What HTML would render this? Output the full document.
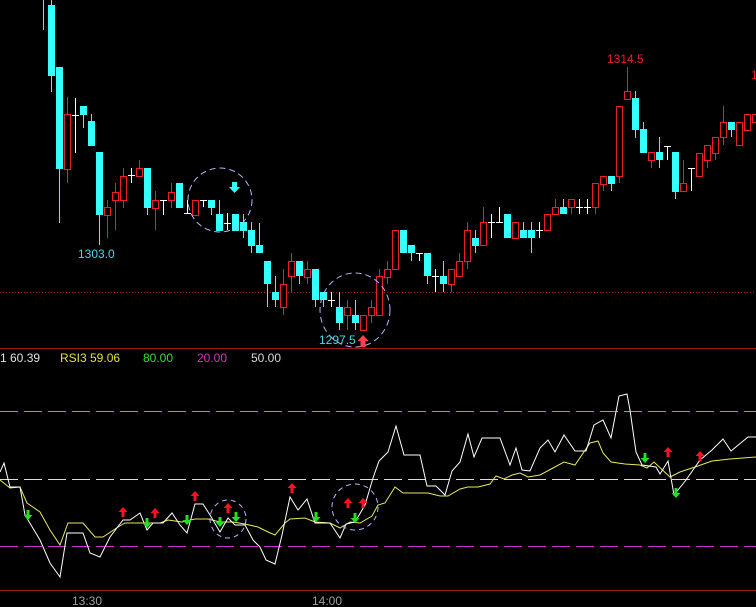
<!DOCTYPE html>
<html><head><meta charset="utf-8"><style>
html,body{margin:0;padding:0;background:#000;width:756px;height:607px;overflow:hidden}
svg{display:block}
text{font-family:"Liberation Sans",sans-serif;font-size:12px}
.c{fill:#33ffff}.cw{stroke:#33ffff;stroke-width:1}
.r{fill:none;stroke:#e8202a;stroke-width:1}.rw{stroke:#e8202a;stroke-width:1}
.w{stroke:#fff;stroke-width:1}
</style></head><body>
<svg width="756" height="607" viewBox="0 0 756 607" xmlns="http://www.w3.org/2000/svg" shape-rendering="crispEdges">
<rect width="756" height="607" fill="#000"/>
<line x1="0" y1="292.5" x2="756" y2="292.5" stroke="#a02020" stroke-dasharray="1,2"/>
<line x1="0" y1="348.5" x2="756" y2="348.5" stroke="#a01818"/>
<line x1="0" y1="590.5" x2="756" y2="590.5" stroke="#a01818"/>
<line x1="0" y1="411.5" x2="756" y2="411.5" stroke="#30e030" stroke-dasharray="18,6"/>
<line x1="0" y1="479.5" x2="756" y2="479.5" stroke="#f0d8c8" stroke-dasharray="18,6"/>
<line x1="0" y1="546.5" x2="756" y2="546.5" stroke="#d030d0" stroke-dasharray="18,6"/>

<g>
<line x1="43.5" y1="0" x2="43.5" y2="30" class="cw"/>
<line x1="51.5" y1="0" x2="51.5" y2="92" class="cw"/><rect x="48" y="5" width="7" height="71" class="c"/>
<line x1="59.5" y1="67" x2="59.5" y2="223" class="cw"/><rect x="56" y="67" width="7" height="102" class="c"/>
<line x1="67.5" y1="97" x2="67.5" y2="183" class="rw"/><rect x="64.5" y="114.5" width="6" height="55" class="r" style="fill:#000"/>
<line x1="75.5" y1="98" x2="75.5" y2="153" class="w"/><line x1="72" y1="115.5" x2="79" y2="115.5" class="w"/>
<line x1="83.5" y1="106" x2="83.5" y2="128" class="cw"/><rect x="80" y="106" width="7" height="9" class="c"/>
<line x1="91.5" y1="114" x2="91.5" y2="146" class="cw"/><rect x="88" y="121" width="7" height="25" class="c"/>
<line x1="99.5" y1="152" x2="99.5" y2="245" class="cw"/><rect x="96" y="152" width="7" height="63" class="c"/>
<line x1="107.5" y1="200" x2="107.5" y2="238" class="rw"/><rect x="104.5" y="207.5" width="6" height="8" class="r" style="fill:#000"/>
<line x1="115.5" y1="183" x2="115.5" y2="230" class="rw"/><rect x="112.5" y="192.5" width="6" height="8" class="r" style="fill:#000"/>
<line x1="123.5" y1="168" x2="123.5" y2="208" class="rw"/><rect x="120.5" y="176.5" width="6" height="24" class="r" style="fill:#000"/>
<line x1="131.5" y1="168" x2="131.5" y2="183" class="w"/><line x1="128" y1="175.5" x2="135" y2="175.5" class="w"/>
<line x1="139.5" y1="160" x2="139.5" y2="176" class="rw"/><rect x="136.5" y="168.5" width="6" height="8" class="r" style="fill:#000"/>
<line x1="147.5" y1="168" x2="147.5" y2="215" class="cw"/><rect x="144" y="168" width="7" height="40" class="c"/>
<line x1="155.5" y1="191" x2="155.5" y2="230" class="rw"/><rect x="152.5" y="200.5" width="6" height="8" class="r" style="fill:#000"/>
<line x1="163.5" y1="200" x2="163.5" y2="215" class="w"/><line x1="160" y1="200.5" x2="167" y2="200.5" class="w"/>
<line x1="171.5" y1="183" x2="171.5" y2="208" class="rw"/><rect x="168.5" y="192.5" width="6" height="8" class="r" style="fill:#000"/>
<rect x="176" y="183" width="7" height="25" class="c"/>
<line x1="187.5" y1="200" x2="187.5" y2="213" class="w"/><line x1="184" y1="213.5" x2="191" y2="213.5" class="w"/>
<rect x="192.5" y="200.5" width="6" height="15" class="r" style="fill:#000"/>
<line x1="203.5" y1="200" x2="203.5" y2="207" class="w"/><line x1="200" y1="200.5" x2="207" y2="200.5" class="w"/>
<line x1="211.5" y1="200" x2="211.5" y2="215" class="cw"/><rect x="208" y="200" width="7" height="8" class="c"/>
<line x1="219.5" y1="200" x2="219.5" y2="231" class="cw"/><rect x="216" y="214" width="7" height="17" class="c"/>
<line x1="227.5" y1="213" x2="227.5" y2="230" class="w"/><line x1="224" y1="223.5" x2="231" y2="223.5" class="w"/>
<rect x="232" y="214" width="7" height="17" class="c"/>
<line x1="243.5" y1="214" x2="243.5" y2="238" class="cw"/><rect x="240" y="222" width="7" height="9" class="c"/>
<line x1="251.5" y1="222" x2="251.5" y2="253" class="cw"/><rect x="248" y="230" width="7" height="16" class="c"/>
<line x1="259.5" y1="223" x2="259.5" y2="253" class="cw"/><rect x="256" y="245" width="7" height="8" class="c"/>
<line x1="267.5" y1="261" x2="267.5" y2="307" class="cw"/><rect x="264" y="261" width="7" height="23" class="c"/>
<line x1="275.5" y1="276" x2="275.5" y2="307" class="cw"/><rect x="272" y="292" width="7" height="8" class="c"/>
<line x1="283.5" y1="269" x2="283.5" y2="315" class="rw"/><rect x="280.5" y="284.5" width="6" height="23" class="r" style="fill:#000"/>
<line x1="291.5" y1="253" x2="291.5" y2="292" class="rw"/><rect x="288.5" y="261.5" width="6" height="15" class="r" style="fill:#000"/>
<line x1="299.5" y1="261" x2="299.5" y2="284" class="cw"/><rect x="296" y="261" width="7" height="15" class="c"/>
<line x1="307.5" y1="261" x2="307.5" y2="284" class="rw"/><rect x="304.5" y="269.5" width="6" height="8" class="r" style="fill:#000"/>
<line x1="315.5" y1="269" x2="315.5" y2="307" class="cw"/><rect x="312" y="269" width="7" height="31" class="c"/>
<line x1="323.5" y1="292" x2="323.5" y2="307" class="cw"/><rect x="320" y="292" width="7" height="8" class="c"/>
<line x1="331.5" y1="292" x2="331.5" y2="307" class="w"/><line x1="328" y1="300.5" x2="335" y2="300.5" class="w"/>
<line x1="339.5" y1="292" x2="339.5" y2="330" class="cw"/><rect x="336" y="307" width="7" height="16" class="c"/>
<line x1="347.5" y1="300" x2="347.5" y2="330" class="rw"/><rect x="344.5" y="307.5" width="6" height="8" class="r" style="fill:#000"/>
<line x1="355.5" y1="300" x2="355.5" y2="330" class="cw"/><rect x="352" y="315" width="7" height="8" class="c"/>
<rect x="360.5" y="315.5" width="6" height="15" class="r" style="fill:#000"/>
<line x1="371.5" y1="300" x2="371.5" y2="323" class="rw"/><rect x="368.5" y="307.5" width="6" height="8" class="r" style="fill:#000"/>
<line x1="379.5" y1="269" x2="379.5" y2="315" class="rw"/><rect x="376.5" y="276.5" width="6" height="39" class="r" style="fill:#000"/>
<line x1="387.5" y1="261" x2="387.5" y2="284" class="rw"/><rect x="384.5" y="269.5" width="6" height="8" class="r" style="fill:#000"/>
<rect x="392.5" y="230.5" width="6" height="39" class="r" style="fill:#000"/>
<rect x="400" y="230" width="7" height="23" class="c"/>
<line x1="411.5" y1="245" x2="411.5" y2="261" class="cw"/><rect x="408" y="245" width="7" height="8" class="c"/>
<line x1="419.5" y1="253" x2="419.5" y2="261" class="w"/><line x1="416" y1="253.5" x2="423" y2="253.5" class="w"/>
<line x1="427.5" y1="253" x2="427.5" y2="284" class="cw"/><rect x="424" y="253" width="7" height="23" class="c"/>
<line x1="435.5" y1="269" x2="435.5" y2="292" class="w"/><line x1="432" y1="276.5" x2="439" y2="276.5" class="w"/>
<line x1="443.5" y1="261" x2="443.5" y2="292" class="cw"/><rect x="440" y="276" width="7" height="8" class="c"/>
<line x1="451.5" y1="269" x2="451.5" y2="292" class="rw"/><rect x="448.5" y="269.5" width="6" height="15" class="r" style="fill:#000"/>
<line x1="459.5" y1="253" x2="459.5" y2="276" class="rw"/><rect x="456.5" y="261.5" width="6" height="15" class="r" style="fill:#000"/>
<line x1="467.5" y1="222" x2="467.5" y2="269" class="rw"/><rect x="464.5" y="230.5" width="6" height="31" class="r" style="fill:#000"/>
<line x1="475.5" y1="230" x2="475.5" y2="253" class="cw"/><rect x="472" y="238" width="7" height="8" class="c"/>
<line x1="483.5" y1="207" x2="483.5" y2="245" class="rw"/><rect x="480.5" y="222.5" width="6" height="23" class="r" style="fill:#000"/>
<line x1="491.5" y1="214" x2="491.5" y2="238" class="w"/><line x1="488" y1="222.5" x2="495" y2="222.5" class="w"/>
<line x1="499.5" y1="207" x2="499.5" y2="222" class="w"/><line x1="496" y1="222.5" x2="503" y2="222.5" class="w"/>
<rect x="504" y="214" width="7" height="24" class="c"/>
<rect x="512.5" y="222.5" width="6" height="16" class="r" style="fill:#000"/>
<line x1="523.5" y1="222" x2="523.5" y2="238" class="cw"/><rect x="520" y="230" width="7" height="8" class="c"/>
<line x1="531.5" y1="222" x2="531.5" y2="253" class="cw"/><rect x="528" y="230" width="7" height="8" class="c"/>
<line x1="539.5" y1="222" x2="539.5" y2="238" class="w"/><line x1="536" y1="230.5" x2="543" y2="230.5" class="w"/>
<rect x="544.5" y="214.5" width="6" height="16" class="r" style="fill:#000"/>
<line x1="555.5" y1="199" x2="555.5" y2="214" class="rw"/><rect x="552.5" y="207.5" width="6" height="7" class="r" style="fill:#000"/>
<line x1="563.5" y1="199" x2="563.5" y2="214" class="cw"/><rect x="560" y="207" width="7" height="7" class="c"/>
<line x1="571.5" y1="199" x2="571.5" y2="214" class="rw"/><rect x="568.5" y="199.5" width="6" height="8" class="r" style="fill:#000"/>
<line x1="579.5" y1="199" x2="579.5" y2="214" class="w"/><line x1="576" y1="207.5" x2="583" y2="207.5" class="w"/>
<line x1="587.5" y1="199" x2="587.5" y2="214" class="w"/><line x1="584" y1="207.5" x2="591" y2="207.5" class="w"/>
<line x1="595.5" y1="183" x2="595.5" y2="214" class="rw"/><rect x="592.5" y="183.5" width="6" height="24" class="r" style="fill:#000"/>
<line x1="603.5" y1="176" x2="603.5" y2="191" class="rw"/><rect x="600.5" y="176.5" width="6" height="8" class="r" style="fill:#000"/>
<line x1="611.5" y1="176" x2="611.5" y2="191" class="cw"/><rect x="608" y="176" width="7" height="8" class="c"/>
<line x1="619.5" y1="106" x2="619.5" y2="183" class="rw"/><rect x="616.5" y="106.5" width="6" height="70" class="r" style="fill:#000"/>
<line x1="627.5" y1="67" x2="627.5" y2="99" class="rw"/><rect x="624.5" y="91.5" width="6" height="8" class="r" style="fill:#000"/>
<line x1="635.5" y1="91" x2="635.5" y2="138" class="cw"/><rect x="632" y="98" width="7" height="32" class="c"/>
<line x1="643.5" y1="122" x2="643.5" y2="153" class="cw"/><rect x="640" y="129" width="7" height="24" class="c"/>
<line x1="651.5" y1="152" x2="651.5" y2="168" class="rw"/><rect x="648.5" y="152.5" width="6" height="8" class="r" style="fill:#000"/>
<line x1="659.5" y1="137" x2="659.5" y2="168" class="cw"/><rect x="656" y="152" width="7" height="8" class="c"/>
<line x1="667.5" y1="146" x2="667.5" y2="160" class="w"/><line x1="664" y1="146.5" x2="671" y2="146.5" class="w"/>
<line x1="675.5" y1="152" x2="675.5" y2="199" class="cw"/><rect x="672" y="152" width="7" height="40" class="c"/>
<line x1="683.5" y1="160" x2="683.5" y2="191" class="rw"/><rect x="680.5" y="183.5" width="6" height="8" class="r" style="fill:#000"/>
<line x1="691.5" y1="168" x2="691.5" y2="191" class="w"/><line x1="688" y1="168.5" x2="695" y2="168.5" class="w"/>
<rect x="696.5" y="153.5" width="6" height="23" class="r" style="fill:#000"/>
<line x1="707.5" y1="145" x2="707.5" y2="168" class="rw"/><rect x="704.5" y="145.5" width="6" height="15" class="r" style="fill:#000"/>
<line x1="715.5" y1="137" x2="715.5" y2="160" class="rw"/><rect x="712.5" y="137.5" width="6" height="16" class="r" style="fill:#000"/>
<line x1="723.5" y1="106" x2="723.5" y2="145" class="rw"/><rect x="720.5" y="122.5" width="6" height="15" class="r" style="fill:#000"/>
<line x1="731.5" y1="122" x2="731.5" y2="137" class="cw"/><rect x="728" y="122" width="7" height="8" class="c"/>
<rect x="736.5" y="122.5" width="6" height="23" class="r" style="fill:#000"/>
<rect x="744.5" y="114.5" width="6" height="16" class="r" style="fill:#000"/>
<rect x="752.5" y="114.5" width="6" height="8" class="r" style="fill:#000"/>
</g>

<g shape-rendering="auto">
<ellipse cx="220" cy="200" rx="32" ry="32" fill="none" stroke="#b0b8ff" stroke-dasharray="6,4"/>
<ellipse cx="355" cy="310" rx="35" ry="37" fill="none" stroke="#b0b8ff" stroke-dasharray="6,4"/>
<path d="M232 182h5v5h3l-5.5 6l-5.5-6h3z" fill="#33ffff"/>
<path d="M363 335l-5.5 6h3v6h5v-6h3z" fill="#ff4050"/>
</g>
<text x="78" y="258" fill="#4ad8e8">1303.0</text>
<text x="607" y="63" fill="#e8202a">1314.5</text>
<text x="751" y="79" fill="#e8202a">1</text>
<text x="319" y="344" fill="#4ad8e8">1297.5</text>

<text x="0" y="362" fill="#e0e0e0">1 60.39</text>
<text x="60" y="362" fill="#e0e040">RSI3 59.06</text>
<text x="143" y="362" fill="#30e030">80.00</text>
<text x="197" y="362" fill="#e030c0">20.00</text>
<text x="251" y="362" fill="#d8d8d8">50.00</text>

<g shape-rendering="auto" fill="none">
<polyline stroke="#e8e860" stroke-width="1" points="0,480 10,488 20,487 27,503 40,512 50,530 60,545 68,523 83,523 95,537 103,537 118,527 125,523 147,523 160,523 168,520 182,522 195,519 208,519 220,522 233,522 245,524 258,527 268,532 275,535 285,523 290,519 305,518 315,522 330,523 340,528 350,522 360,523 372,516 378,505 385,503 395,487 403,493 428,493 440,496 448,496 460,489 468,487 478,487 490,484 496,476 504,479 512,475 520,473 528,477 540,475 553,468 564,462 575,465 590,443 598,441 603,453 611,462 625,464 640,465 647,468 654,462 670,477 680,472 695,467 712,461 730,459 756,457"/>
<polyline stroke="#ffffff" stroke-width="1" points="0,472 4,463 10,487 20,487 25,515 40,540 50,563 60,577 67,533 83,533 90,553 100,557 110,537 123,520 130,520 140,513 147,530 153,523 163,523 172,513 180,525 187,533 195,504 203,504 210,515 220,532 228,518 235,525 245,525 253,540 260,547 266,560 275,564 282,535 290,497 298,510 307,499 315,523 330,523 340,538 346,524 355,522 365,505 373,478 379,461 388,452 396,426 404,455 420,455 427,486 436,486 445,495 452,471 460,462 468,434 474,457 482,438 500,438 510,465 516,448 522,470 530,471 540,448 548,440 555,452 564,435 575,451 586,451 594,425 603,420 611,438 619,396 627,394 630,410 636,452 642,465 656,467 660,474 668,461 674,495 686,480 700,460 712,450 723,439 731,451 748,437 756,437"/>
<ellipse cx="228" cy="519" rx="18" ry="19" stroke="#b0b8ff" stroke-dasharray="5,4"/>
<ellipse cx="355" cy="507" rx="23" ry="23" stroke="#b0b8ff" stroke-dasharray="5,4"/>
</g>
<g shape-rendering="auto" fill="#ff1020">
<path d="M123 507l-4.5 5h3v5h3v-5h3z"/>
<path d="M155 508l-4.5 5h3v5h3v-5h3z"/>
<path d="M195 491l-4.5 5h3v5h3v-5h3z"/>
<path d="M228 503l-4.5 5h3v5h3v-5h3z"/>
<path d="M292 483l-4.5 5h3v5h3v-5h3z"/>
<path d="M348 498l-4.5 5h3v5h3v-5h3z"/>
<path d="M363 498l-4.5 5h3v5h3v-5h3z"/>
<path d="M668 447l-4.5 5h3v5h3v-5h3z"/>
<path d="M700 451l-4.5 5h3v5h3v-5h3z"/>
</g>
<g shape-rendering="auto" fill="#20e020">
<path d="M28 520l-4.5-5h3v-5h3v5h3z"/>
<path d="M147 528l-4.5-5h3v-5h3v5h3z"/>
<path d="M187 525l-4.5-5h3v-5h3v5h3z"/>
<path d="M220 527l-4.5-5h3v-5h3v5h3z"/>
<path d="M236 522l-4.5-5h3v-5h3v5h3z"/>
<path d="M316 522l-4.5-5h3v-5h3v5h3z"/>
<path d="M355 523l-4.5-5h3v-5h3v5h3z"/>
<path d="M645 463l-4.5-5h3v-5h3v5h3z"/>
<path d="M676 498l-4.5-5h3v-5h3v5h3z"/>
</g>
<text x="72" y="605" fill="#a0a0a0">13:30</text>
<text x="312" y="605" fill="#a0a0a0">14:00</text>
</svg>
</body></html>
